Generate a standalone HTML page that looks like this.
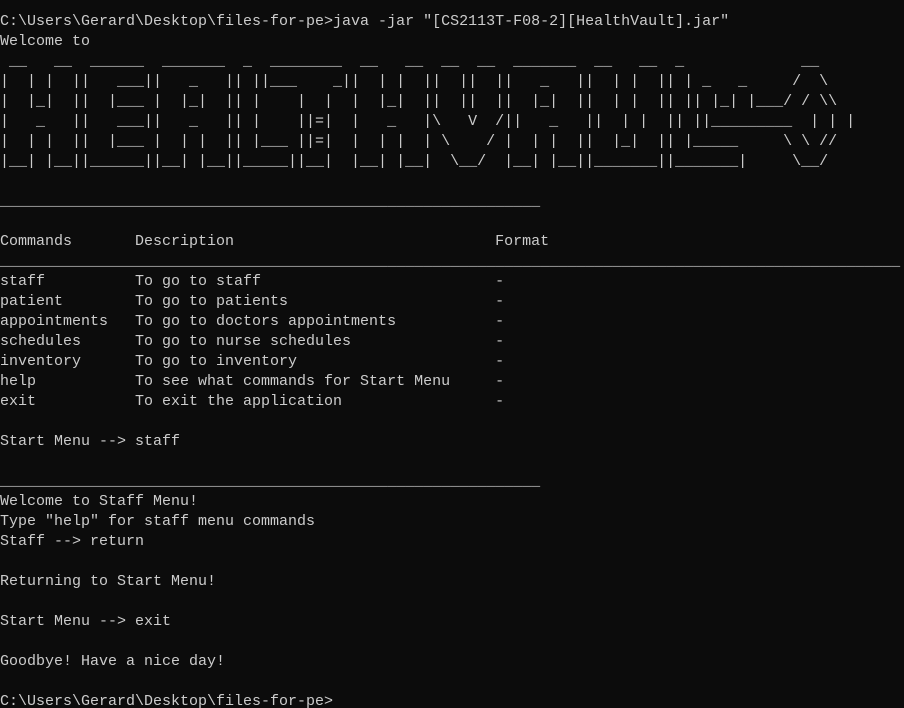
<!DOCTYPE html>
<html><head><meta charset="utf-8"><style>
html,body{margin:0;padding:0;background:#0c0c0c;width:904px;height:708px;overflow:hidden}
pre{margin:0;padding:12px 0 0 0;font-family:"Liberation Mono",monospace;font-size:15px;line-height:20px;color:#cccccc;white-space:pre}
</style></head><body><pre>C:\Users\Gerard\Desktop\files-for-pe&gt;java -jar "[CS2113T-F08-2][HealthVault].jar"
Welcome to
 __   __  ______  _______  _  ________  __   __  __  __  _______  __   __  _             __
|  | |  ||   ___||   _   || ||___    _||  | |  ||  ||  ||   _   ||  | |  || | _   _     /  \
|  |_|  ||  |___ |  |_|  || |    |  |  |  |_|  ||  ||  ||  |_|  ||  | |  || || |_| |___/ / \\
|   _   ||   ___||   _   || |    ||=|  |   _   |\   V  /||   _   ||  | |  || ||_________  | | |
|  | |  ||  |___ |  | |  || |___ ||=|  |  | |  | \    / |  | |  ||  |_|  || |_____     \ \ //
|__| |__||______||__| |__||_____||__|  |__| |__|  \__/  |__| |__||_______||_______|     \__/

____________________________________________________________

Commands       Description                             Format
____________________________________________________________________________________________________
staff          To go to staff                          -
patient        To go to patients                       -
appointments   To go to doctors appointments           -
schedules      To go to nurse schedules                -
inventory      To go to inventory                      -
help           To see what commands for Start Menu     -
exit           To exit the application                 -

Start Menu --&gt; staff

____________________________________________________________
Welcome to Staff Menu!
Type "help" for staff menu commands
Staff --&gt; return

Returning to Start Menu!

Start Menu --&gt; exit

Goodbye! Have a nice day!

C:\Users\Gerard\Desktop\files-for-pe&gt;</pre></body></html>
